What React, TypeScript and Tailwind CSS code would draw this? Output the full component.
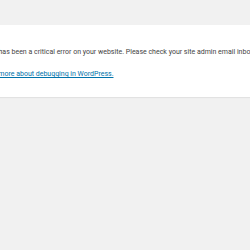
export default function App() {
    return (
        <div className="h-[250px] w-[250px] overflow-hidden bg-[#f1f1f1] font-['Roboto',sans-serif]">
            <div className="mt-[25px] h-[72px] bg-white shadow-[0_1px_1px_rgba(0,0,0,0.06)] pt-[22px]">
                <div className="ml-[-21px] whitespace-nowrap text-[7px] leading-[10px] text-[#444]">
                    <p>There has been a critical error on your website. Please check your site admin email inbox for instructions.</p>
                    <p className="mt-[12px]">
                        <a href="#" className="text-[#0073aa] underline">Learn more about debugging in WordPress.</a>
                    </p>
                </div>
            </div>
        </div>
    )
}
